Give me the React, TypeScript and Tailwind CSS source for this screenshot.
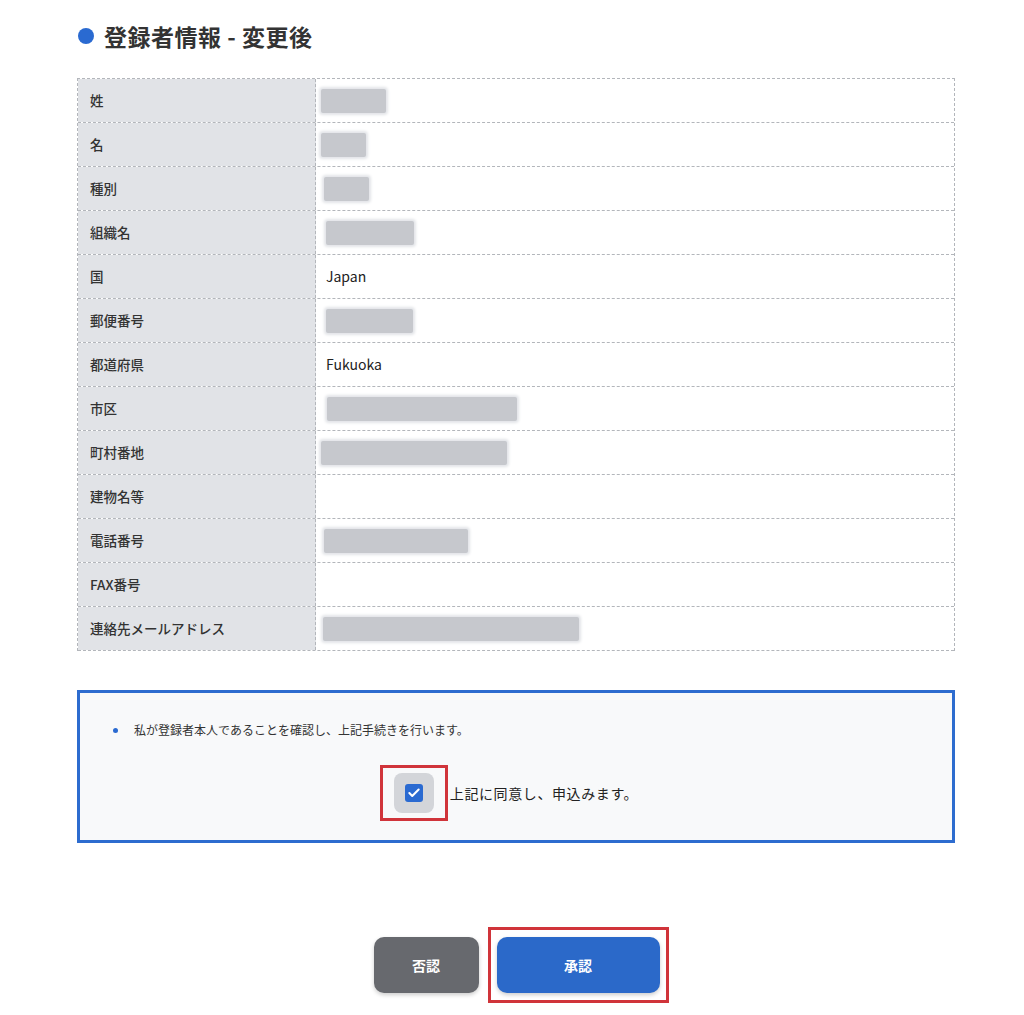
import { Check } from "lucide-react";

type Row = { label: string; value?: string; blur?: [number, number] };

// blur: [左オフセット, 幅] — 個人情報はぼかし表示
const rows: Row[] = [
  { label: "姓", blur: [5, 65] },
  { label: "名", blur: [5, 45] },
  { label: "種別", blur: [8, 45] },
  { label: "組織名", blur: [10, 88] },
  { label: "国", value: "Japan" },
  { label: "郵便番号", blur: [10, 87] },
  { label: "都道府県", value: "Fukuoka" },
  { label: "市区", blur: [11, 190] },
  { label: "町村番地", blur: [5, 186] },
  { label: "建物名等" },
  { label: "電話番号", blur: [8, 144] },
  { label: "FAX番号" },
  { label: "連絡先メールアドレス", blur: [7, 256] },
];

export default function App() {
  return (
    <div
      className="min-h-[1015px] w-[1024px] bg-white text-[#222]"
      style={{ fontFamily: '"Noto Sans CJK JP", "Noto Sans", sans-serif' }}
    >
      <div className="pl-[77px] pt-[20px] w-[955px]">
        <div className="flex items-center gap-[10px] h-[32px]">
          <span className="ml-[1px] h-[16px] w-[16px] rounded-full bg-[#2a6ad1]" />
          <h2 className="text-[23px] font-bold tracking-[0.5px] text-[#333]">登録者情報 - 変更後</h2>
        </div>

        <div className="mt-[26px] border-l border-t border-r border-dashed border-[#b3b6bb]">
          {rows.map((r) => (
            <div key={r.label} className="flex h-[44px] border-b border-dashed border-[#b3b6bb]">
              <div className="flex w-[238px] items-center border-r border-dashed border-[#b3b6bb] bg-[#e1e3e7] pl-[12px] text-[13.5px] font-medium text-[#333]">
                {r.label}
              </div>
              <div className="flex flex-1 items-center text-[14px] text-[#222]">
                {r.value && <span className="pl-[10px]">{r.value}</span>}
                {r.blur && (
                  <span
                    className="h-[24px] rounded-[2px] bg-[#c6c8cd] shadow-[0_0_3px_2px_#e2e4e8]"
                    style={{ marginLeft: r.blur[0], width: r.blur[1] }}
                  />
                )}
              </div>
            </div>
          ))}
        </div>

        <div className="mt-[39px] h-[153px] border-[3px] border-[#2d6ccf] bg-[#f8f9fa]">
          <div className="flex items-center pl-[33px] pt-[28px] text-[12px] text-[#333]">
            <span className="mr-[16px] h-[5px] w-[5px] rounded-full bg-[#2a6ad1]" />
            私が登録者本人であることを確認し、上記手続きを行います。
          </div>
          <div className="mt-[26px] flex items-center justify-center pr-[14px]">
            <div className="flex h-[56px] w-[68px] items-center justify-center border-[3px] border-[#d0343a]">
              <div className="flex h-[40px] w-[40px] items-center justify-center rounded-[8px] bg-[#d3d5d9]">
                <div className="flex h-[18px] w-[18px] items-center justify-center rounded-[3px] bg-[#2a6ad1]">
                  <Check className="h-[14px] w-[14px] text-white" strokeWidth={3.5} />
                </div>
              </div>
            </div>
            <span className="ml-[2px] text-[14px] tracking-[0.6px] text-[#222]">上記に同意し、申込みます。</span>
          </div>
        </div>

        <div className="mt-[84px] flex items-center justify-center gap-[9px] pl-[10px]">
          <button className="h-[56px] w-[105px] rounded-[10px] bg-[#67696e] text-[14px] font-bold text-white shadow-[0_2px_4px_rgba(0,0,0,0.2)]">
            否認
          </button>
          <div className="flex h-[76px] w-[181px] items-center justify-center border-[3px] border-[#d0343a]">
            <button className="h-[56px] w-[163px] rounded-[10px] bg-[#2b69c9] text-[14px] font-bold text-white shadow-[0_2px_4px_rgba(0,0,0,0.2)]">
              承認
            </button>
          </div>
        </div>
      </div>
    </div>
  );
}
